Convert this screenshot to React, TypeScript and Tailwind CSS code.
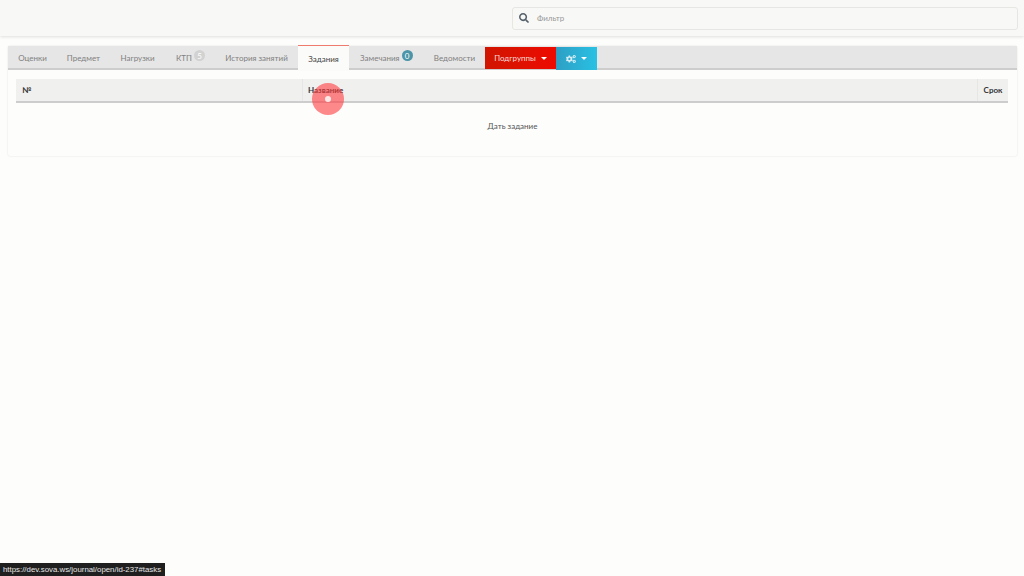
import { FaCogs, FaSearch } from 'react-icons/fa';

const Caret = () => (
  <span className="ml-[5px] inline-block h-0 w-0 border-x-[3px] border-t-[3px] border-x-transparent border-t-white" />
);

const Badge = ({ value, className }: { value: string; className: string }) => (
  <span className={`ml-[2px] mb-[5px] flex h-[11px] w-[11px] items-center justify-center rounded-full text-[8px] leading-none text-white ${className}`}>
    {value}
  </span>
);

const Tab = ({ label, width }: { label: string; width: string }) => (
  <div className={`flex h-full items-center justify-center pt-[2px] text-[#808080] ${width}`}>{label}</div>
);

export default function App() {
  return (
    <div className="relative h-[576px] w-[1024px] overflow-hidden bg-[#fdfdfc] font-['Lato',sans-serif] text-[8px] text-[#555]">
      <header className="flex h-[36px] items-center justify-end bg-[#f8f8f7] pr-[6px] shadow-[0_1px_3px_rgba(0,0,0,0.12)]">
        <div className="flex h-[23px] w-[506px] items-center rounded-[3px] border border-[#e6e6e2] bg-[#f8f8f6] pl-[6px]">
          <FaSearch size={10} className="text-[#55626c]" />
          <span className="ml-[8px] text-[#999]">Фильтр</span>
        </div>
      </header>

      <section className="ml-[8px] mt-[10px] h-[110px] w-[1009px] rounded-[2px] bg-[#fdfdfc] shadow-[0_0_2px_rgba(0,0,0,0.12)]">
        <nav className="flex h-[24px] w-full items-stretch border-b-2 border-[#cdcdcd] bg-[#e6e6e6]">
          <Tab label="Оценки" width="w-[49px]" />
          <Tab label="Предмет" width="w-[53px]" />
          <Tab label="Нагрузки" width="w-[55px]" />
          <div className="flex h-full w-[50px] items-center pl-[11px] pt-[2px] text-[#808080]">
            КТП
            <Badge value="5" className="bg-[#d2d2d2]" />
          </div>
          <Tab label="История занятий" width="w-[83px]" />
          <div className="-mt-[1px] flex h-[26px] w-[51px] items-center justify-center border-t border-[#ee7b6d] bg-[#fbfbf9] text-[#444]">
            Задания
          </div>
          <div className="flex h-full w-[75px] items-center pl-[11px] pt-[2px] text-[#808080]">
            Замечания
            <Badge value="0" className="bg-[#4c95a8]" />
          </div>
          <Tab label="Ведомости" width="w-[61px]" />
          <div className="mt-[1px] flex h-[22px] w-[71px] items-center justify-center bg-gradient-to-r from-[#d01500] to-[#ee0a00] text-[#f6dcd8]">
            Подгруппы
            <Caret />
          </div>
          <div className="mt-[1px] flex h-[23px] w-[41px] items-center justify-center bg-gradient-to-r from-[#2e9fc4] to-[#27c1e4] text-white">
            <FaCogs size={10} className="text-[#d5eef5]" />
            <Caret />
          </div>
        </nav>

        <div className="px-[8px] pt-[9px]">
          <div className="flex h-[24px] w-[992px] border-b-2 border-[#cdcdcd] bg-[#f0f0ef] font-bold text-[#333]">
            <div className="flex w-[287px] items-center border-r border-[#e6e6e6] pl-[6px]">№</div>
            <div className="flex flex-1 items-center border-r border-[#e6e6e6] pl-[5px]">Название</div>
            <div className="flex w-[30px] items-center justify-center">Срок</div>
          </div>
          <div className="pt-[16px] text-center leading-[14px] text-[#555]">Дать задание</div>
        </div>
      </section>

      {/* click marker from the recording */}
      <div className="absolute left-[312px] top-[83px] flex h-[32px] w-[32px] items-center justify-center rounded-full bg-[#ff3b3f]/60">
        <span className="h-[6px] w-[6px] rounded-full bg-[#fde8e8]" />
      </div>

      <div className="absolute bottom-0 left-0 flex h-[13px] w-[165px] items-center whitespace-nowrap bg-[#1f1f1f] pl-[3px] font-['Liberation_Sans',sans-serif] text-[7.85px] text-[#e6e6e6]">
        https://dev.sova.ws/journal/open/id-237#tasks
      </div>
    </div>
  );
}
